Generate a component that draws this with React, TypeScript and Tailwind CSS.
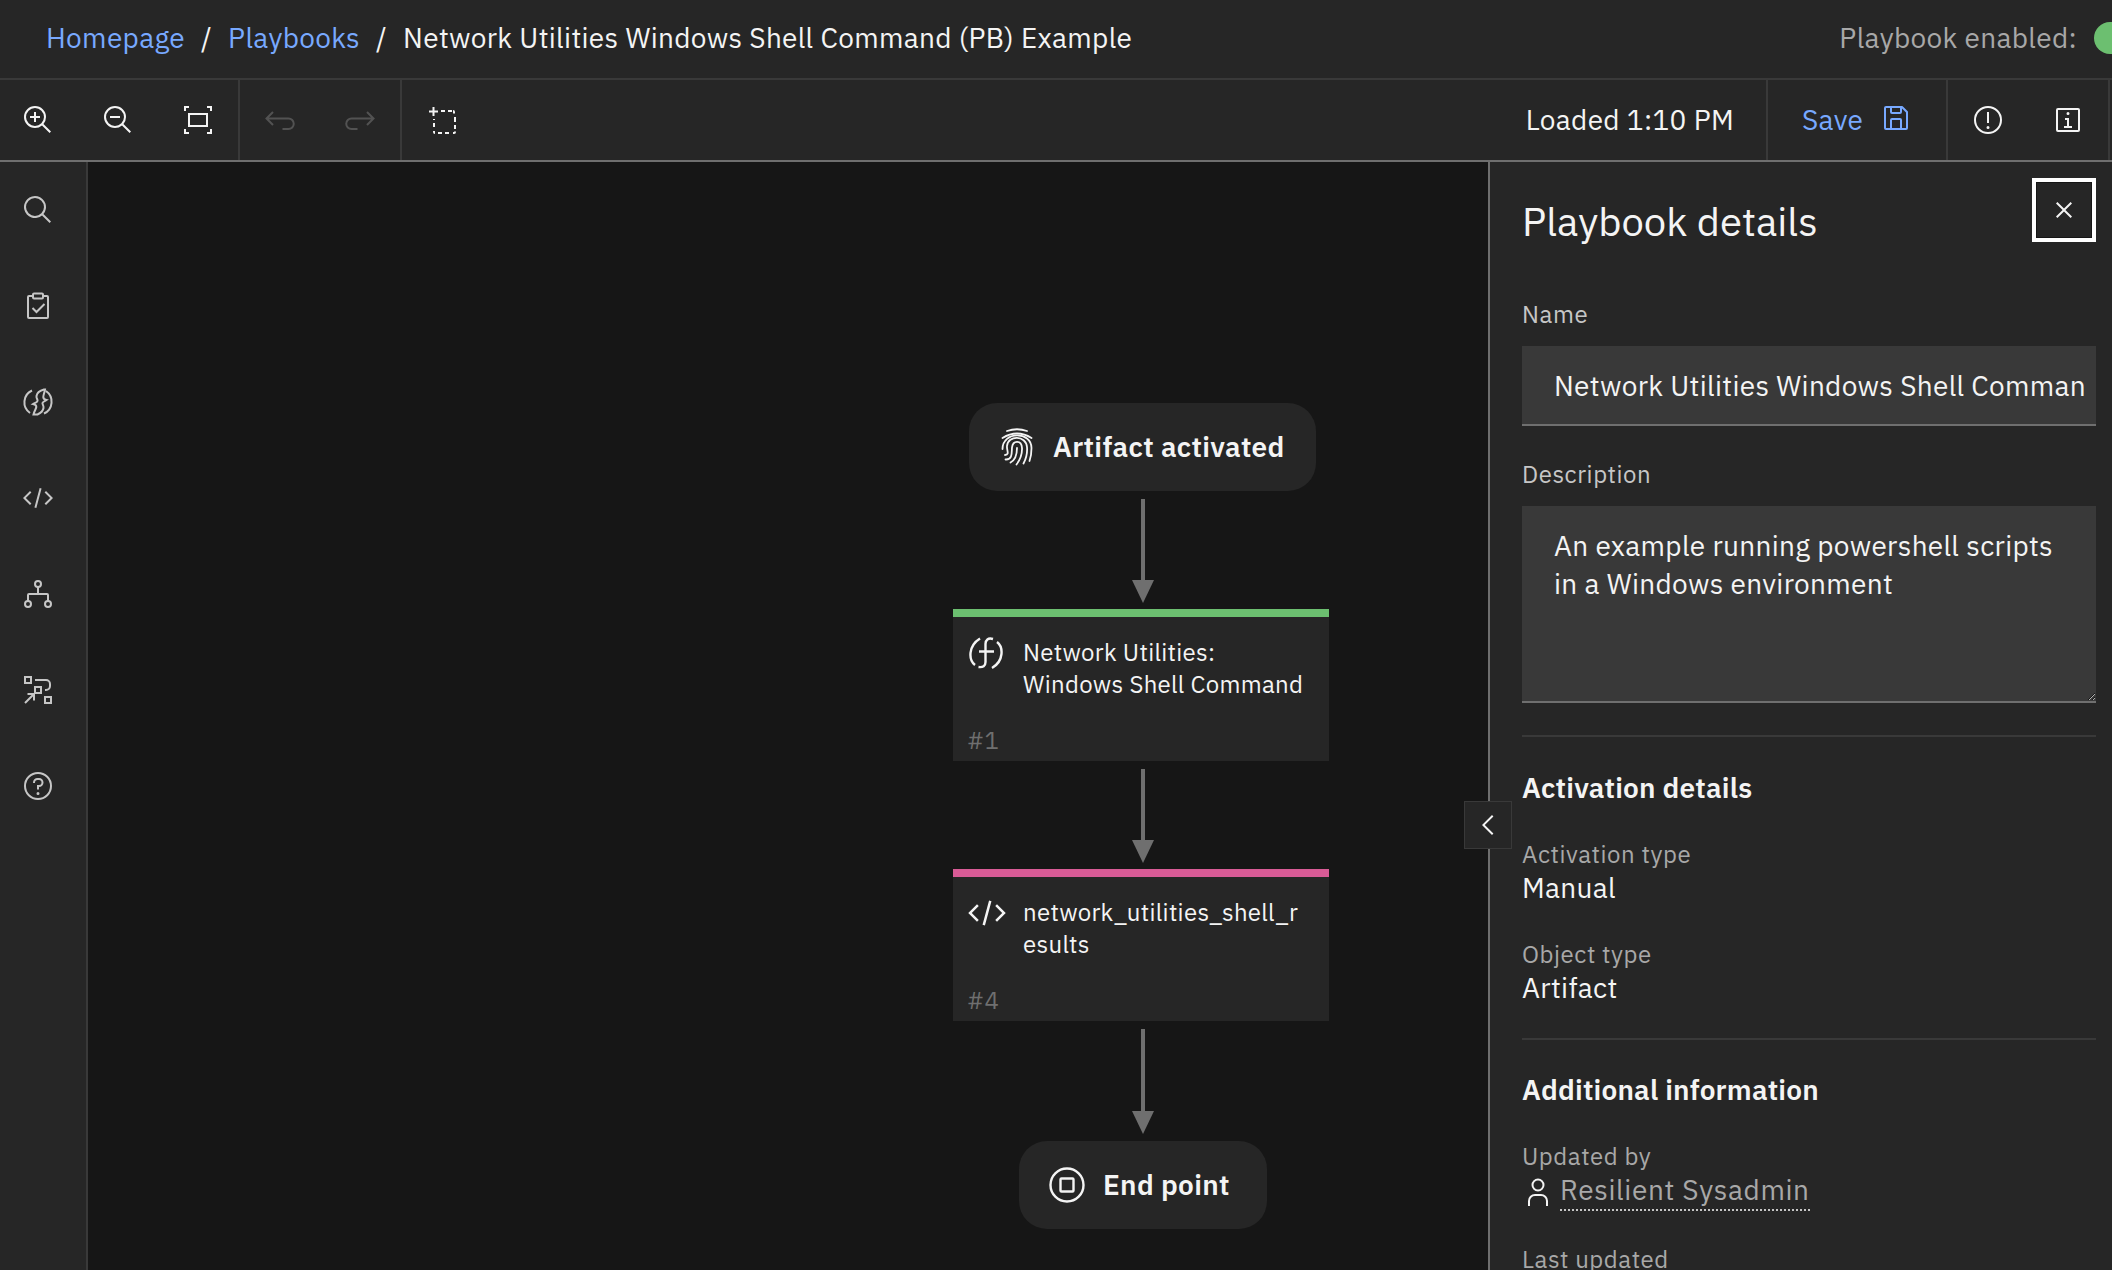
import { ReactNode } from 'react';

// carbon-ish icons, all on a 32 grid
function Icon({ children, className = 'w-8 h-8' }: { children: ReactNode; className?: string }) {
  return (
    <svg viewBox="0 0 32 32" fill="currentColor" className={`shrink-0 ${className}`}>
      {children}
    </svg>
  );
}

const CIRCLE = 'M16 2a14 14 0 1 0 14 14A14 14 0 0 0 16 2Zm0 26a12 12 0 1 1 12-12 12 12 0 0 1-12 12Z';
const LENS = 'M21.45 20A10.9 10.9 0 0 0 24 13 11 11 0 1 0 13 24a10.9 10.9 0 0 0 7-2.55L27.59 29 29 27.59ZM13 22a9 9 0 1 1 9-9 9 9 0 0 1-9 9Z';
const CODE = 'M31 16 24 23 22.59 21.59 28.17 16 22.59 10.41 24 9ZM1 16 8 9 9.41 10.41 3.83 16 9.41 21.59 8 23ZM12.42 25.48 17.64 6 19.57 6.52 14.35 26Z';

const ZoomIn = () => <Icon><path d={LENS} /><path d="M18 12h-4V8h-2v4H8v2h4v4h2v-4h4Z" /></Icon>;
const ZoomOut = () => <Icon><path d={LENS} /><path d="M8 12h10v2H8Z" /></Icon>;
const Fit = () => (
  <Icon>
    <g fill="none" stroke="currentColor" strokeWidth="2">
      <path d="M3 7V3h4M25 3h4v4M29 25v4h-4M7 29H3v-4" />
      <rect x="7" y="10" width="18" height="12" />
    </g>
  </Icon>
);
const Undo = () => (
  <Icon>
    <path d="M3 14.500h21.500a5.250 5.250 0 0 1 0 10.500h-6M9 8l-6.500 6.500L9 21" fill="none" stroke="currentColor" strokeWidth="2" />
  </Icon>
);
const Redo = () => (
  <Icon>
    <path d="M29 14.500H7.500a5.250 5.250 0 0 0 0 10.500h6M23 8l6.500 6.500L23 21" fill="none" stroke="currentColor" strokeWidth="2" />
  </Icon>
);
const SelectArea = () => (
  <Icon>
    <path
      d="M3 7.500h9M7.500 3v9M15 7h4M22 7h4M28 9.500v-1.500a1 1 0 0 0-1-1M29 13v5M29 21v4M29 27.500v.5a1 1 0 0 1-1 1h-1M23 29h-4M16 29h-4M9 29a1 1 0 0 1-1-1v-1M8 23v-4M8 16v-1"
      fill="none"
      stroke="currentColor"
      strokeWidth="2"
    />
  </Icon>
);
const Save = () => (
  <Icon>
    <path d="M27.71 9.29l-5-5A1 1 0 0 0 22 4H6a2 2 0 0 0-2 2v20a2 2 0 0 0 2 2h20a2 2 0 0 0 2-2V10a1 1 0 0 0-.29-.71ZM12 6h8v4h-8Zm8 20h-8v-8h8Zm2 0v-8a2 2 0 0 0-2-2h-8a2 2 0 0 0-2 2v8H6V6h4v4a2 2 0 0 0 2 2h8a2 2 0 0 0 2-2V6.41l4 4V26Z" />
  </Icon>
);
const Warning = () => (
  <Icon>
    <path d={CIRCLE} />
    <path d="M15 8h2v11h-2ZM16 22a1.500 1.500 0 1 0 1.500 1.500A1.500 1.500 0 0 0 16 22Z" />
  </Icon>
);
const InfoSquare = () => (
  <Icon>
    <path d="M26 4H6a2 2 0 0 0-2 2v20a2 2 0 0 0 2 2h20a2 2 0 0 0 2-2V6a2 2 0 0 0-2-2Zm0 22H6V6h20Z" />
    <path d="M17 22v-8h-4v2h2v6h-3v2h8v-2ZM16 8a1.500 1.500 0 1 0 1.500 1.500A1.500 1.500 0 0 0 16 8Z" />
  </Icon>
);
const Close = () => (
  <Icon><path d="M24 9.400 22.600 8 16 14.600 9.400 8 8 9.400l6.600 6.600L8 22.600 9.400 24l6.600-6.600 6.600 6.600 1.400-1.400-6.600-6.600Z" /></Icon>
);
const Search = () => (
  <Icon><path d="M29 27.59l-7.55-7.55a11 11 0 1 0-1.41 1.41L27.59 29ZM4 13a9 9 0 1 1 9 9 9 9 0 0 1-9-9Z" /></Icon>
);
const Clipboard = () => (
  <Icon>
    <g fill="none" stroke="currentColor" strokeWidth="2">
      <path d="M11 6H7a1 1 0 0 0-1 1v20a1 1 0 0 0 1 1h18a1 1 0 0 0 1-1V7a1 1 0 0 0-1-1h-4" />
      <rect x="11" y="3.500" width="10" height="5" rx="1" />
      <path d="M10.500 18l4 4 8-8" />
    </g>
  </Icon>
);
const Bolt = () => (
  <Icon>
    <g fill="none" stroke="currentColor" strokeWidth="2">
      <path d="M10 4.500A13 13 0 0 0 8 27M22 27.500A13 13 0 0 0 24 5" />
      <path d="M22 3.500c-4 1-7 3-7.500 6.500-.4 2.500 1.500 3.500 1 5-.5 1.600-3 2-4.500 3 2.500.6 3.500 1.500 3.300 3-.3 2-1.800 3.500-2.800 7.500h4c3.500-1.500 5.500-3.500 6-6.500.4-2.500-1.300-3.500-1-5 .4-1.500 2.500-2 4-3-2.300-.6-3.300-1.500-3.200-3 .1-2.500 1.200-4 1.700-7.500Z" />
    </g>
  </Icon>
);
const Tree = () => (
  <Icon>
    <g fill="none" stroke="currentColor" strokeWidth="2">
      <circle cx="16" cy="6" r="3" />
      <circle cx="6" cy="26" r="3" />
      <circle cx="26" cy="26" r="3" />
      <path d="M16 9v7M6 23v-6a1 1 0 0 1 1-1h18a1 1 0 0 1 1 1v6" />
    </g>
  </Icon>
);
const Flow = () => (
  <Icon>
    <g fill="none" stroke="currentColor" strokeWidth="2">
      <rect x="3" y="3" width="6" height="6" />
      <rect x="13" y="13" width="6" height="6" />
      <rect x="23" y="23" width="6" height="6" />
      <path d="M13 6h11a4 4 0 0 1 4 4v2a4 4 0 0 1-4 4h-1M3 29l9-9M5.500 20H12v6.500" />
    </g>
  </Icon>
);
const Help = () => (
  <Icon>
    <path d={CIRCLE} />
    <path d="M16 22a1.500 1.500 0 1 0 1.500 1.500A1.500 1.500 0 0 0 16 22ZM17 8h-1.500a4.500 4.500 0 0 0-4.500 4.500v.5h2v-.5a2.500 2.500 0 0 1 2.500-2.500H17a2.500 2.500 0 0 1 0 5h-2v4.500h2V17a4.500 4.500 0 0 0 0-9Z" />
  </Icon>
);
const Fingerprint = () => (
  <svg viewBox="0 0 32 38" fill="none" stroke="currentColor" strokeWidth="1.800" strokeLinecap="round" className="w-8 h-[38px] shrink-0">
    <path d="M6 3Q16-.5 26 3" />
    <path d="M1.500 10Q16 1 30.500 10" />
    <path d="M1.500 21C1.500 3 30.500 3 30.500 20c0 5-.5 9-2 13" />
    <path d="M4 27C9 27 5.500 22 6 18 7 7 25 7 26 19c.5 6-1 12-3.500 16.500" />
    <path d="M4.500 31.500C12 32 10.500 24 11 19.500 12 12 20.500 12 21 20c.3 7-2 12-5.500 16.500" />
    <path d="M9.500 34.500C14 32 16 26 16 20" />
  </svg>
);
const Fn = () => (
  <svg viewBox="0 0 34 34" fill="none" stroke="currentColor" strokeWidth="2.400" className="w-[34px] h-[34px] shrink-0">
    <path d="M11 2.500C-1 10-.5 24 6 29M23 32c12-7 11.500-21 5-26" />
    <path d="M24 3c-5-1.500-7.500 1-7.500 5v18c0 4-2.500 5.500-7 5M10 15.500h15" />
  </svg>
);
const Stop = () => (
  <svg viewBox="0 0 36 36" fill="none" stroke="currentColor" strokeWidth="2.400" className="w-9 h-9 shrink-0">
    <circle cx="18" cy="18" r="16.500" />
    <rect x="11.500" y="11.500" width="13" height="13" rx="1" />
  </svg>
);
const Person = () => (
  <svg viewBox="0 0 20 28" fill="none" stroke="currentColor" strokeWidth="2" className="w-5 h-7 shrink-0">
    <circle cx="10" cy="7" r="5.500" />
    <path d="M1 28v-5a6 6 0 0 1 6-6h6a6 6 0 0 1 6 6v5" />
  </svg>
);

function ToolButton({ children }: { children: ReactNode }) {
  return <div className="w-20 h-full shrink-0 flex items-center justify-center">{children}</div>;
}

function Arrow({ className }: { className: string }) {
  return (
    <div className={`absolute flex flex-col items-center w-[22px] ${className}`}>
      <div className="flex-1 w-1 bg-[#6f6f6f]" />
      <div className="w-0 h-0 border-x-[11px] border-x-transparent border-t-[23px] border-t-[#6f6f6f]" />
    </div>
  );
}

function Pill({ icon, label, className }: { icon: ReactNode; label: string; className: string }) {
  return (
    <div className={`absolute h-[88px] rounded-[28px] bg-[#262626] flex items-center text-[#f4f4f4] ${className}`}>
      {icon}
      <span className="text-[28px] font-semibold whitespace-nowrap">{label}</span>
    </div>
  );
}

function Card({ stripe, icon, lines, num, className }: { stripe: string; icon: ReactNode; lines: string[]; num: string; className: string }) {
  return (
    <div className={`absolute left-[865px] w-[376px] h-[152px] bg-[#262626] border-t-8 flex flex-col ${stripe} ${className}`}>
      <div className="flex text-[#f4f4f4] text-[24px] leading-8 tracking-[0.3px] pt-[19px] h-[111px]">
        <div className="w-[70px] shrink-0 pl-[16px]">{icon}</div>
        <div>
          {lines.map((l) => (
            <div key={l} className="whitespace-nowrap">{l}</div>
          ))}
        </div>
      </div>
      <div className="pl-[14px] text-[24px] leading-6 text-[#6f6f6f]">{num}</div>
    </div>
  );
}

const LABEL = 'text-[24px] leading-8 tracking-[0.55px]';

function Field({ label, value }: { label: string; value: string }) {
  return (
    <div>
      <div className={`${LABEL} text-[#a8a8a8]`}>{label}</div>
      <div className="text-[28px] leading-9 text-[#f4f4f4]">{value}</div>
    </div>
  );
}

export default function App() {
  const sideIcons = [<Search />, <Clipboard />, <Bolt />, <Icon><path d={CODE} /></Icon>, <Tree />, <Flow />, <Help />];

  return (
    <div className="w-[2112px] h-[1270px] overflow-hidden flex flex-col bg-[#161616] text-[#f4f4f4] font-['IBM_Plex_Sans','Noto_Sans',sans-serif] tracking-[0.32px]">
      {/* breadcrumb */}
      <div className="h-20 shrink-0 bg-[#262626] border-b-2 border-[#393939] flex items-center pl-[46px] text-[28px] overflow-hidden pb-[2px]">
        <span className="text-[#78a9ff]">Homepage</span>
        <span className="mx-4">/</span>
        <span className="text-[#78a9ff]">Playbooks</span>
        <span className="mx-4">/</span>
        <span className="whitespace-nowrap">Network Utilities Windows Shell Command (PB) Example</span>
        <div className="ml-auto flex items-center shrink-0">
          <span className="text-[#a8a8a8]">Playbook enabled:</span>
          <div className="ml-[17px] w-[64px] h-8 rounded-full bg-[#6cbf70] -mr-[46px]" />
        </div>
      </div>

      {/* toolbar */}
      <div className="h-[82px] shrink-0 bg-[#262626] border-b-2 border-[#6f6f6f] flex items-stretch">
        <div className="w-[240px] flex justify-end border-r-2 border-[#393939]">
          <ToolButton><ZoomIn /></ToolButton>
          <ToolButton><ZoomOut /></ToolButton>
          <ToolButton><Fit /></ToolButton>
        </div>
        <div className="w-[162px] flex border-r-2 border-[#393939] text-[#525252]">
          <ToolButton><Undo /></ToolButton>
          <ToolButton><Redo /></ToolButton>
        </div>
        <div className="flex items-center pl-6"><SelectArea /></div>
        <div className="ml-auto flex items-center pr-8 border-r-2 border-[#393939] text-[28px]">Loaded 1:10 PM</div>
        <div className="w-[180px] flex items-center pl-[34px] border-r-2 border-[#393939] text-[#78a9ff] text-[28px]">
          <span>Save</span>
          <div className="ml-[17px] -mt-1"><Save /></div>
        </div>
        <div className="flex border-r-2 border-[#393939] mr-[2px]">
          <ToolButton><Warning /></ToolButton>
          <ToolButton><InfoSquare /></ToolButton>
        </div>
      </div>

      <div className="flex-1 flex min-h-0">
        {/* left rail */}
        <div className="w-[88px] shrink-0 bg-[#262626] border-r-2 border-[#393939] text-[#c6c6c6] pr-[10px]">
          {sideIcons.map((ic, i) => (
            <div key={i} className="h-24 flex items-center justify-center">{ic}</div>
          ))}
        </div>

        {/* canvas */}
        <div className="relative flex-1 bg-[#161616]">
          <Pill
            className="left-[881px] top-[241px] w-[347px] pl-8 gap-5"
            icon={<Fingerprint />}
            label="Artifact activated"
          />
          <Arrow className="left-[1044px] top-[337px] h-[104px]" />
          <Card
            className="top-[447px]"
            stripe="border-[#6cbf70]"
            icon={<Fn />}
            lines={['Network Utilities:', 'Windows Shell Command']}
            num="#1"
          />
          <Arrow className="left-[1044px] top-[607px] h-[94px]" />
          <Card
            className="top-[707px]"
            stripe="border-[#d95b96]"
            icon={<div className="text-[#f4f4f4] -mt-[3px] -ml-[2px]"><Icon className="w-10 h-10"><path d={CODE} /></Icon></div>}
            lines={['network_utilities_shell_r', 'esults']}
            num="#4"
          />
          <Arrow className="left-[1044px] top-[867px] h-[105px]" />
          <Pill
            className="left-[931px] top-[979px] w-[248px] pl-[30px] gap-[18px]"
            icon={<Stop />}
            label="End point"
          />
          {/* collapse handle sits over the panel edge */}
          <div className="absolute right-[-24px] top-[639px] w-12 h-12 bg-[#262626] border border-[#393939] flex items-center justify-center z-10">
            <svg viewBox="0 0 32 32" className="w-8 h-8" fill="currentColor">
              <path d="M10 16 20 6l1.400 1.400L12.800 16l8.600 8.600L20 26Z" />
            </svg>
          </div>
        </div>

        {/* details panel */}
        <div className="w-[624px] shrink-0 bg-[#262626] border-l-2 border-[#6f6f6f] pl-8 pr-4 overflow-hidden relative">
          <div className="absolute right-4 top-4 w-16 h-16 border-4 border-white flex items-center justify-center ring-1 ring-inset ring-[#161616]">
            <Close />
          </div>
          <div className="text-[40px] leading-[48px] pt-[35px] tracking-normal text-[#f4f4f4]">Playbook details</div>

          <div className={`mt-[53px] ${LABEL} text-[#c6c6c6]`}>Name</div>
          <input
            readOnly
            value="Network Utilities Windows Shell Comman"
            className="block mt-4 w-full h-20 bg-[#393939] border-b-2 border-[#6f6f6f] pl-[32px] pr-2 text-[28px] tracking-[0.32px] text-[#f4f4f4] outline-none"
          />

          <div className={`mt-8 ${LABEL} text-[#c6c6c6]`}>Description</div>
          <textarea
            readOnly
            defaultValue="An example running powershell scripts in a Windows environment"
            className="block mt-4 w-full h-[197px] bg-[#393939] border-b-2 border-[#6f6f6f] pl-[32px] pr-6 pt-[21px] text-[28px] tracking-[0.32px] leading-[38px] text-[#f4f4f4] outline-none resize-y"
          />

          <div className="mt-8 h-[2px] bg-[#393939]" />
          <div className="mt-[33px] text-[28px] leading-9 font-semibold tracking-[0.2px]">Activation details</div>
          <div className="mt-8 flex flex-col gap-8">
            <Field label="Activation type" value="Manual" />
            <Field label="Object type" value="Artifact" />
          </div>

          <div className="mt-8 h-[2px] bg-[#393939]" />
          <div className="mt-8 text-[28px] leading-9 font-semibold tracking-[0.2px]">Additional information</div>
          <div className={`mt-8 ${LABEL} text-[#a8a8a8]`}>Updated by</div>
          <div className="flex items-center">
            <div className="ml-[6px] mr-3 text-[#f4f4f4]"><Person /></div>
            <span className="text-[28px] leading-9 tracking-[0.64px] pb-[1px] text-[#a8a8a8] border-b-2 border-dotted border-[#c6c6c6]">Resilient Sysadmin</span>
          </div>
          <div className={`mt-8 ${LABEL} text-[#a8a8a8]`}>Last updated</div>
        </div>
      </div>
    </div>
  );
}
